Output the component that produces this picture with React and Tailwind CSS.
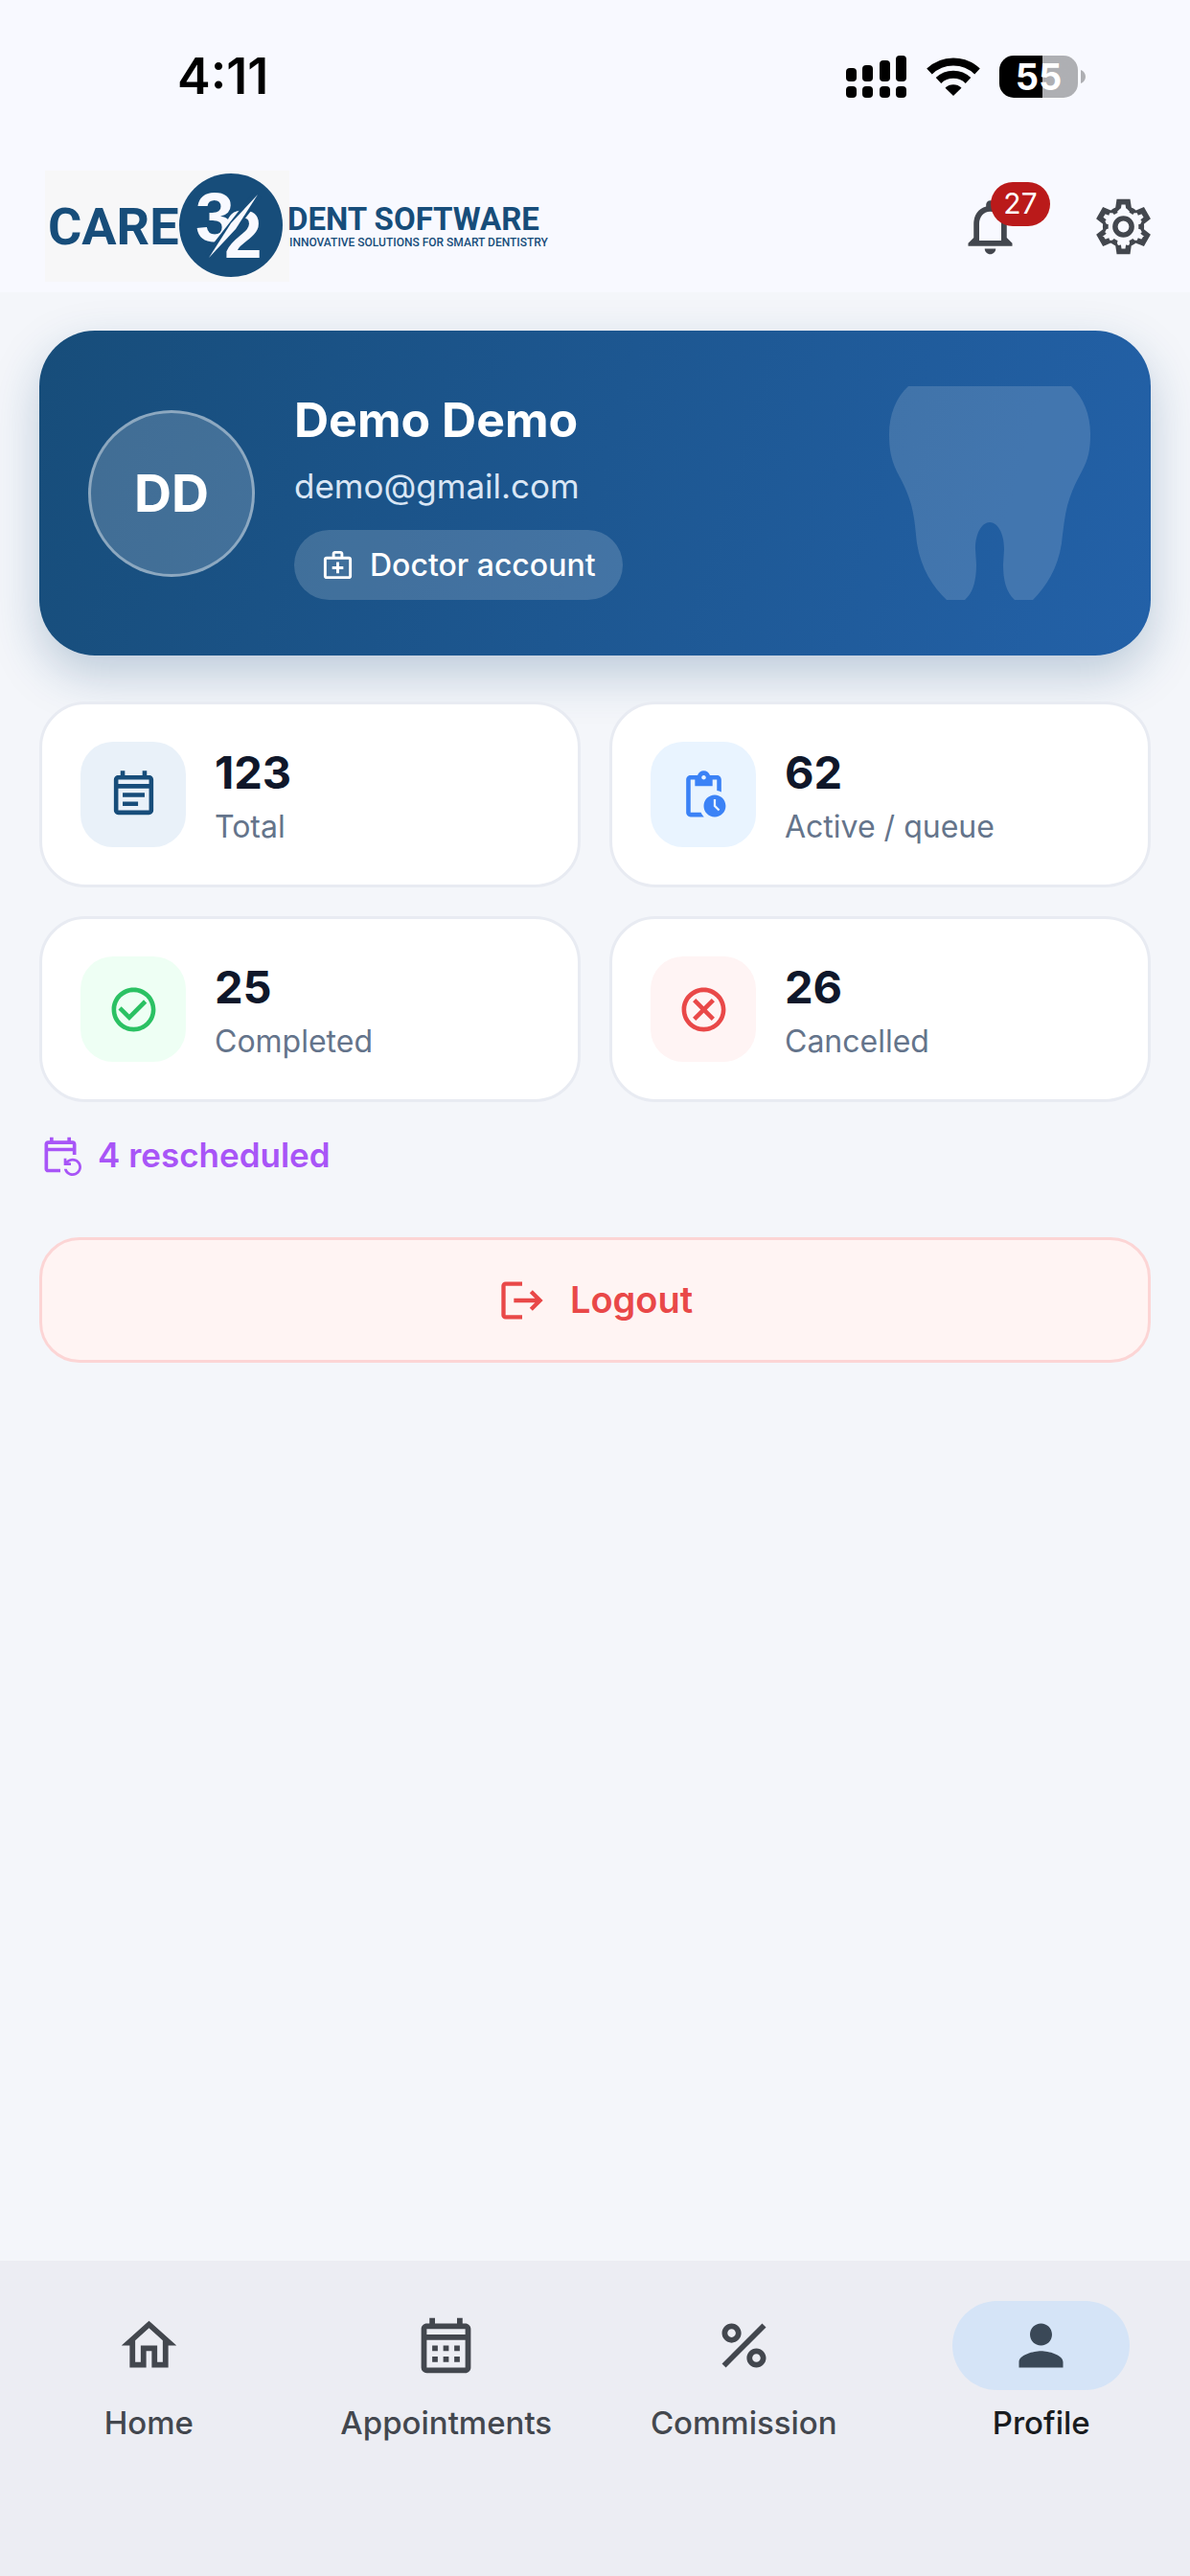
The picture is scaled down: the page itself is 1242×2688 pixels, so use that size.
import {
  MdCheckCircleOutline,
  MdLogout,
  MdOutlineCalendarMonth,
  MdOutlineCancel,
  MdOutlineEventNote,
  MdOutlineHome,
  MdOutlineMedicalServices,
  MdNotificationsNone,
  MdPendingActions,
  MdPercent,
  MdPerson,
} from "react-icons/md";

const stats = [
  { value: "123", label: "Total", Icon: MdOutlineEventNote, tile: "bg-[#e9f1f9] text-[#174d7a]" },
  { value: "62", label: "Active / queue", Icon: MdPendingActions, tile: "bg-[#e9f4ff] text-[#3b82f6]" },
  { value: "25", label: "Completed", Icon: MdCheckCircleOutline, tile: "bg-[#eefff4] text-[#2bc163]" },
  { value: "26", label: "Cancelled", Icon: MdOutlineCancel, tile: "bg-[#fff4f4] text-[#e94848]" },
];

const tabs = [
  { label: "Home", Icon: MdOutlineHome },
  { label: "Appointments", Icon: MdOutlineCalendarMonth },
  { label: "Commission", Icon: MdPercent },
  { label: "Profile", Icon: MdPerson, active: true },
];

function SignalIcon() {
  return (
    <svg width="64" height="44" viewBox="0 0 64 44" aria-hidden="true">
      <rect x="0" y="13" width="11" height="14" rx="4" />
      <rect x="17" y="10" width="11" height="17" rx="4" />
      <rect x="35" y="5" width="11" height="22" rx="4" />
      <rect x="52" y="0" width="11" height="27" rx="4" />
      <rect x="0" y="32" width="11" height="12" rx="4" />
      <rect x="17" y="32" width="11" height="12" rx="4" />
      <rect x="35" y="32" width="11" height="12" rx="4" />
      <rect x="52" y="32" width="11" height="12" rx="4" />
    </svg>
  );
}

function WifiIcon() {
  return (
    <svg width="56" height="42" viewBox="0 0 56 42" aria-hidden="true">
      <g fill="none" stroke="#000" strokeWidth="8">
        <path d="M3 15.500a36 36 0 0 1 50 0" />
        <path d="M12.500 25a22.500 22.500 0 0 1 31 0" />
      </g>
      <path d="M28 41l-8.500-8.300a12.500 12.500 0 0 1 17 0z" />
    </svg>
  );
}

function Battery() {
  return (
    <div className="flex items-center gap-[3px]">
      <div className="flex h-11 w-[82px] items-center justify-center rounded-[15px] bg-linear-to-r from-black from-55% to-[#aeafb3] to-55% text-[38px] font-bold text-white">
        55
      </div>
      <svg width="5" height="14" viewBox="0 0 5 14" fill="#aeafb3" aria-hidden="true">
        <path d="M0 0c3 1 5 4 5 7s-2 6-5 7z" />
      </svg>
    </div>
  );
}

function Logo() {
  return (
    <svg
      width="540"
      height="116"
      viewBox="0 0 540 116"
      fill="#174d7a"
      fontFamily="Roboto, 'Liberation Sans', sans-serif"
      fontWeight="700"
      role="img"
      aria-label="Care 32 Dent Software"
    >
      <rect width="255" height="116" fill="#f7f7f8" />
      <text x="3" y="77" fontSize="54">CARE</text>
      <circle cx="194" cy="57" r="54" />
      <g fill="#f8f9ff" fontFamily="'Liberation Sans', sans-serif">
        <text x="157" y="74" fontSize="73">3</text>
        <text x="187" y="91" fontSize="71">2</text>
      </g>
      <path d="M222 25L171 90" stroke="#174d7a" strokeWidth="10" />
      <path d="M222 25L199 61L171 91L194 55Z" fill="#f8f9ff" />
      <text x="253" y="62" fontSize="33">DENT SOFTWARE</text>
      <text x="255" y="79" fontSize="12" fontWeight="500">INNOVATIVE SOLUTIONS FOR SMART DENTISTRY</text>
    </svg>
  );
}

const gear =
  "M19.44 12.99l-.01.02c.04-.33.08-.67.08-1.01 0-.34-.03-.66-.07-.99l.01.02 2.44-1.92-2.43-4.22-2.87 1.16.01.01c-.52-.4-1.09-.74-1.71-1h.01L14.44 2H9.57l-.44 3.07h.01c-.62.26-1.19.6-1.71 1l.01-.01-2.88-1.17-2.44 4.22 2.44 1.92.01-.02c-.04.33-.07.65-.07.99 0 .34.03.68.08 1.01l-.01-.02-2.43 1.91 2.43 4.2 2.88-1.15-.02-.04c.53.41 1.1.75 1.73 1.01h-.03L9.58 22h4.85l.44-3.07h-.01c.62-.26 1.2-.6 1.73-1.01l-.02.04 2.88 1.15 2.43-4.2z";

function GearIcon() {
  return (
    <svg viewBox="0 0 24 24" fill="none" stroke="currentColor" className="size-[69px]" aria-hidden="true">
      <clipPath id="gear-shape">
        <path d={gear} />
      </clipPath>
      <path d={gear} clipPath="url(#gear-shape)" strokeWidth="4" />
      <circle cx="12" cy="12" r="3" strokeWidth="1.900" />
    </svg>
  );
}

function RescheduleIcon() {
  return (
    <svg viewBox="0 0 24 24" fill="currentColor" className="size-11" aria-hidden="true">
      <path
        fillRule="evenodd"
        d="M21 12V6c0-1.100-.9-2-2-2h-1V2h-2v2H8V2H6v2H5c-1.100 0-2 .9-2 2v14c0 1.100.9 2 2 2h7v-2H5V10h14v2h2zM19 8H5V6h14v2z"
      />
      <path d="M15.640 20c.43 1.450 1.770 2.500 3.360 2.500 1.930 0 3.500-1.570 3.500-3.500s-1.570-3.500-3.500-3.500c-.95 0-1.820.38-2.450 1H18V18h-4v-4h1.500v1.430c.9-.88 2.140-1.430 3.500-1.430 2.760 0 5 2.240 5 5s-2.240 5-5 5c-2.420 0-4.440-1.720-4.900-4h1.540z" />
    </svg>
  );
}

function Tooth() {
  return (
    <svg width="210" height="223" viewBox="0 0 210 223" className="shrink-0 fill-white/15" aria-hidden="true">
      <path d="M20 0H190C203 12 210 30 210 50C210 66 208 76 201 89C184 120 184 133 180 164C176 190 164 209 150 223H131C122 215 119 202 119 186L120 170C120 153 113 142 105 142C97 142 90 153 90 170L91 186C91 202 88 215 79 223H60C46 210 33 190 29 164C26 133 25 120 8 89C2 76 0 66 0 50C0 30 7 12 20 0Z" />
    </svg>
  );
}

export default function App() {
  return (
    <div className="flex min-h-screen flex-col bg-[#f4f6fa] font-['Inter','Liberation_Sans',sans-serif]">
      <header className="bg-[#f8f9ff]">
        <div className="flex h-40 items-center justify-between pr-[109px] pl-[185px]">
          <time className="text-[52px] font-semibold text-black">4:11</time>
          <div className="flex items-center gap-5">
            <SignalIcon />
            <WifiIcon />
            <Battery />
          </div>
        </div>
        <div className="flex items-center justify-between pt-[18px] pr-[35px] pb-[11px] pl-[47px]">
          <Logo />
          <div className="flex items-center gap-[70px] text-[#43474e]">
            <button type="button" aria-label="Notifications" className="relative">
              <MdNotificationsNone className="size-[69px]" />
              <span className="absolute -top-3 left-[35px] flex h-[46px] w-[62px] items-center justify-center rounded-full bg-[#ba1a1a] text-[30px] text-white">
                27
              </span>
            </button>
            <button type="button" aria-label="Settings">
              <GearIcon />
            </button>
          </div>
        </div>
      </header>

      <main className="grow px-[41px] pt-10">
        <section className="flex items-center rounded-[58px] bg-linear-[106deg] from-[#174d7a] to-[#2361a8] py-[58px] pr-[63px] pl-[51px] text-white shadow-[0_20px_50px_rgba(23,77,122,0.25)]">
          <div className="flex size-[174px] shrink-0 items-center justify-center rounded-full border-3 border-white/40 bg-white/18 text-[54px] font-bold">
            DD
          </div>
          <div className="ml-[41px] flex grow flex-col items-start">
            <h1 className="text-[50px] leading-[70px] font-bold">Demo Demo</h1>
            <p className="mt-[11px] text-[35px] leading-[46px] text-[#d9e6f5]">demo@gmail.com</p>
            <div className="mt-[23px] flex h-[73px] items-center gap-4 rounded-full bg-white/17 px-7 text-[32px] font-medium">
              <MdOutlineMedicalServices className="size-[35px]" />
              Doctor account
            </div>
          </div>
          <Tooth />
        </section>

        <section className="mt-12 grid grid-cols-2 gap-[30px]">
          {stats.map(({ value, label, Icon, tile }) => (
            <div
              key={label}
              className="flex items-center gap-[30px] rounded-[48px] border-3 border-[#e8ebf2] bg-white px-10 py-[37px]"
            >
              <div className={`flex size-[110px] items-center justify-center rounded-[34px] ${tile}`}>
                <Icon className="size-[55px]" />
              </div>
              <div>
                <p className="text-[47px] leading-[68px] font-bold text-[#0f172a]">{value}</p>
                <p className="text-[32px] leading-[46px] text-[#64748b]">{label}</p>
              </div>
            </div>
          ))}
        </section>

        <p className="mt-[30px] flex h-[50px] items-center gap-[17px] text-[35px] font-semibold text-[#a855f7]">
          <RescheduleIcon />4 rescheduled
        </p>

        <button
          type="button"
          className="mt-[61px] flex h-[131px] w-full items-center justify-center gap-6 rounded-[42px] border-3 border-[#fcd5d5] bg-[#fff4f3] text-[38px] font-semibold text-[#e94848]"
        >
          <MdLogout className="size-[52px]" />
          Logout
        </button>
      </main>

      <nav className="grid grid-cols-4 bg-[#ecedf3] pt-[42px] pb-[138px]">
        {tabs.map(({ label, Icon, active }) => (
          <a
            key={label}
            href={`#${label.toLowerCase()}`}
            aria-current={active ? "page" : undefined}
            className={`flex flex-col items-center gap-3 text-[33px] leading-[44px] font-medium ${active ? "text-[#191c20]" : "text-[#43474e]"}`}
          >
            <span
              className={`flex h-[93px] w-[185px] items-center justify-center rounded-full ${active ? "bg-[#d5e4f7] text-[#3a4857]" : ""}`}
            >
              <Icon className="size-[69px]" />
            </span>
            {label}
          </a>
        ))}
      </nav>
    </div>
  );
}
